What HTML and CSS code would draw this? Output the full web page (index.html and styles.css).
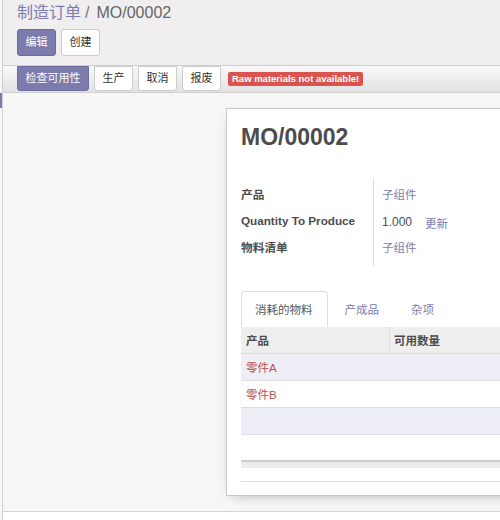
FILE: index.html
```html
<!DOCTYPE html>
<html>
<head>
<meta charset="utf-8">
<link rel="stylesheet" href="styles.css">
</head>
<body>
<div class="app">
  <div class="edge"><div class="edge-mark"></div></div>
  <div class="main">
    <div class="control-panel">
      <div class="breadcrumb"><span class="bc-link">制造订单</span><span class="bc-sep">/</span><span class="bc-active">MO/00002</span></div>
      <div class="cp-buttons">
        <button class="btn btn-primary">编辑</button>
        <button class="btn">创建</button>
      </div>
    </div>
    <div class="statusbar">
      <button class="btn btn-primary sb">检查可用性</button>
      <button class="btn sb">生产</button>
      <button class="btn sb">取消</button>
      <button class="btn sb">报废</button>
      <span class="badge">Raw materials not available!</span>
    </div>
    <div class="sheet-bg">
      <div class="sheet">
        <h1 class="title">MO/00002</h1>
        <div class="group">
          <div class="lbl r1">产品</div><div class="val r1"><span class="link">子组件</span></div>
          <div class="lbl r2">Quantity To Produce</div><div class="val r2"><span class="qty">1.000</span><span class="link">更新</span></div>
          <div class="lbl r3">物料清单</div><div class="val r3"><span class="link">子组件</span></div>
        </div>
        <div class="tabs">
          <div class="tab active">消耗的物料</div>
          <div class="tab">产成品</div>
          <div class="tab">杂项</div>
        </div>
        <div class="table">
          <div class="thead"><div class="c1">产品</div><div class="c2">可用数量</div></div>
          <div class="row odd"><div class="c1 danger">零件A</div><div class="c2"></div></div>
          <div class="row"><div class="c1 danger">零件B</div><div class="c2"></div></div>
          <div class="row odd"><div class="c1"></div><div class="c2"></div></div>
          <div class="spacer"></div>
          <div class="tfoot"></div>
          <div class="tend"></div>
        </div>
      </div>
    </div>
  </div>
</div>
</body>
</html>
```
FILE: styles.css
```css
html, body {
  margin: 0;
  padding: 0;
  width: 500px;
  height: 520px;
  overflow: hidden;
  background: #ffffff;
  font-family: "Liberation Sans", "Noto Sans CJK SC", sans-serif;
  font-size: 11.5px;
  color: #4c4c4c;
}

.app {
  display: flex;
  width: 500px;
  height: 520px;
  overflow: hidden;
}

.edge {
  width: 2px;
  flex: none;
  background: #f7f7f7;
  padding-top: 93px;
}

.edge-mark {
  height: 15px;
  background: #7c7bad;
}

.main {
  flex: none;
  width: 700px;
  border-left: 1px solid #cfcfcf;
}

.control-panel {
  background: #f0eeee;
  padding: 2px 14px 9px;
  border-bottom: 1px solid #cfcfcf;
}

.breadcrumb {
  font-size: 16px;
  line-height: 22px;
  height: 22px;
  white-space: nowrap;
}

.bc-link { color: #7c7bad; }
.bc-sep { color: #777; margin: 0 7px 0 4px; }
.bc-active { color: #666; }

.cp-buttons {
  margin-top: 5px;
  display: flex;
  gap: 5px;
}

.btn {
  font-family: inherit;
  font-size: 11px;
  height: 27px;
  padding: 0 7.5px;
  border: 1px solid #ccc;
  border-radius: 3px;
  background: #fff;
  color: #333;
  line-height: 25px;
  margin: 0;
}

.btn-primary {
  background: #7c7bad;
  border-color: #6d6c9f;
  color: #fff;
}

.statusbar {
  display: flex;
  align-items: flex-start;
  gap: 5px;
  padding: 0 14px;
  height: 26px;
  background: linear-gradient(#f8f8f8, #e2e2e2);
  border-bottom: 1px solid #cfcfcf;
}

.btn.sb {
  height: 25px;
  line-height: 23px;
  border-top-left-radius: 0;
  border-top-right-radius: 0;
}

.badge {
  margin-top: 6px;
  margin-left: 2px;
  height: 14px;
  line-height: 14px;
  padding: 0 4px;
  background: #d9534f;
  color: #fff;
  font-weight: bold;
  font-size: 9.5px;
  border-radius: 2px;
  white-space: nowrap;
}

.sheet-bg {
  height: 388px;
  padding: 15px 0 15px 223px;
  background-color: #f9f9f9;
  background-image:
    linear-gradient(45deg, rgba(0,0,0,0.018) 25%, transparent 25%, transparent 75%, rgba(0,0,0,0.018) 75%),
    linear-gradient(45deg, rgba(0,0,0,0.018) 25%, transparent 25%, transparent 75%, rgba(0,0,0,0.018) 75%);
  background-size: 4px 4px;
  background-position: 0 0, 2px 2px;
  border-bottom: 1px solid #d6d6d6;
}

.sheet {
  box-sizing: border-box;
  width: 420px;
  height: 388px;
  background: #fff;
  border: 1px solid #c8c8d3;
  box-shadow: 0 4px 12px -6px rgba(0,0,0,0.35);
  padding: 14px 0 0 14px;
}

.title {
  margin: 0;
  font-size: 23px;
  line-height: 28px;
  font-weight: bold;
  color: #4c4c4c;
}

.group {
  margin-top: 27px;
  display: grid;
  grid-template-columns: 132px 1fr;
  grid-template-rows: 29px 26px 25px 8px;
}

.lbl {
  font-weight: bold;
  font-size: 11.7px;
  display: flex;
  align-items: center;
  white-space: nowrap;
}

.val {
  border-left: 1px solid #ddd;
  padding-left: 8px;
  display: flex;
  align-items: center;
}

.r1 { padding-top: 2px; }
.r2 { padding-top: 1px; }
.r3 { padding-top: 2px; }
.val.r2 .qty { margin-top: 2px; }
.val.r3 { padding-top: 3px; }

.group::after {
  content: "";
  grid-column: 2;
  border-left: 1px solid #ddd;
}

.link { color: #7c7bad; }
.qty { margin-right: 13px; color: #4c4c4c; font-size: 12px; }
.val.r2 .link { margin-top: 4px; }

.tabs {
  margin-top: 25px;
  display: flex;
  height: 36px;
}

.tab {
  box-sizing: border-box;
  height: 36px;
  line-height: 36px;
  padding: 0 14px;
  margin-right: 2px;
  color: #7c7bad;
  border: 1px solid transparent;
  border-bottom: none;
  white-space: nowrap;
}

.tab.active {
  color: #555;
  background: #fff;
  border-color: #ddd;
  border-radius: 4px 4px 0 0;
  padding: 0 14px 0 13px;
}

.table {
  width: 420px;
}

.thead, .row {
  display: flex;
  height: 26px;
  align-items: stretch;
}

.thead {
  background: #eeeeee;
  font-weight: bold;
  border-bottom: 1px solid #dcdcdc;
}

.row {
  border-bottom: 1px solid #dddddd;
}

.row.odd { background: #eeeef7; }

.c1, .c2 {
  display: flex;
  align-items: center;
  padding-left: 5px;
}

.c1 { width: 143px; }

.thead .c2 {
  border-left: 1px solid #dcdcdc;
  padding-left: 4px;
}

.danger { color: #c0504d; }

.spacer { height: 25px; }

.tfoot {
  height: 6px;
  background: #ececec;
  border-top: 2px solid #cccccc;
}

.tend {
  height: 13px;
  border-bottom: 1px solid #dddddd;
}
```
